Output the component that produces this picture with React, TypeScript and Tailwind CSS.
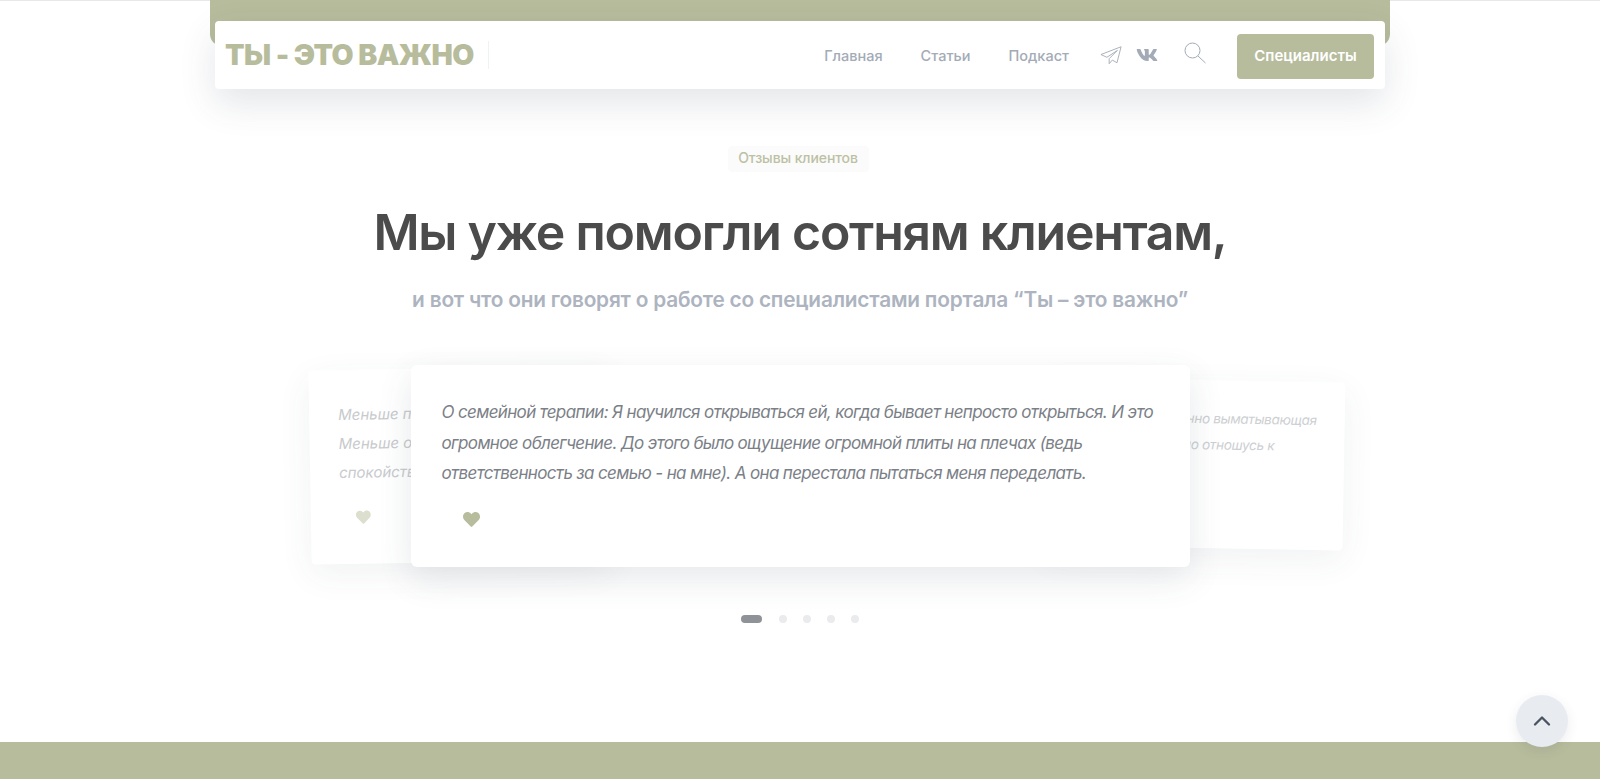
import type { ReactNode } from "react";
import { ChevronUp } from "lucide-react";
import { FaHeart, FaVk } from "react-icons/fa";

const font = "font-['Inter','Liberation_Sans',sans-serif]";

const Header = () => {
  return (
    <div className="relative flex w-full flex-col items-center">
      <div className="h-[46px] w-[1180px] rounded-b-xl bg-[#b7bc9c]"></div>
      <header className="z-10 -mt-[25px] flex h-[68px] w-[1170px] items-center rounded bg-white pl-[10px] pr-[11px] shadow-[0_14px_36px_rgba(60,70,90,0.14)]">
        <div className="mt-[1px] text-[28.5px] font-black tracking-[-0.55px] whitespace-nowrap text-[#b7bc9c]">ТЫ - ЭТО ВАЖНО</div>
        <div className="ml-[14px] h-7 w-px bg-[#f0f1f3]"></div>
        <nav className="mt-[2px] ml-auto flex items-center gap-[38px] text-[14.5px] font-medium text-[#a3abb6]">
          <a>Главная</a>
          <a>Статьи</a>
          <a>Подкаст</a>
        </nav>
        <div className="ml-[31px] flex items-center">
          <svg width="22" height="22" viewBox="0 0 24 24" fill="none" stroke="#a3abb6" strokeWidth="1" strokeLinejoin="round">
            <path d="M23 3 1 11.500l6.500 3L19 7l-9 9v5.500l3.500-4 5 3z" />
          </svg>
          <FaVk className="ml-[14px] h-[22px] w-[22px] text-[#a3abb6]" />
          <svg className="ml-[26px] -mt-[5px]" width="22" height="22" viewBox="0 0 22 22" fill="none" stroke="#a3abb6" strokeWidth="1">
            <circle cx="8.500" cy="8.500" r="7.500" />
            <path d="M14 14l7.500 7" />
          </svg>
        </div>
        <button className="mt-[2px] ml-[31px] h-[45px] w-[137px] rounded bg-[#b7bc9c] text-[15px] font-semibold text-white">Специалисты</button>
      </header>
    </div>
  );
};

const SideCard = ({ side, children }: { side: string; children: ReactNode }) => {
  return <div className={side}>{children}</div>;
};

const Reviews = () => {
  return (
    <section className="flex flex-1 flex-col items-center">
      <div className="mt-[57px] -ml-[4px] flex h-[26px] w-[141px] items-center justify-center rounded bg-[#fbfbfb] pb-[4px] text-[14px] font-medium tracking-[-0.1px] text-[#bcc1a4]">Отзывы клиентов</div>
      <h1 className="mt-[29px] text-[50px] leading-[62px] font-semibold tracking-[-1.23px] whitespace-nowrap text-[#4b4b4b]">Мы уже помогли сотням клиентам,</h1>
      <h2 className="mt-[22px] text-[20.8px] leading-[30px] font-semibold tracking-[-0.2px] whitespace-nowrap text-[#adb4bf]">и вот что они говорят о работе со специалистами портала “Ты – это важно”</h2>

      <div className="relative mt-[50px] w-[779px]">
        <SideCard side="absolute top-[3px] -left-[101px] h-[194px] w-[300px] -rotate-1 overflow-hidden rounded bg-white pt-[30px] pl-[29px] text-[15px] leading-[29px] whitespace-nowrap text-[#c8cacd] italic shadow-[0_10px_34px_rgba(60,70,90,0.07)]">
          <p>Меньше пр</p>
          <p>Меньше об</p>
          <p>спокойств</p>
          <FaHeart className="mt-[23px] ml-[16px] h-[15px] w-[15px] text-[#dcdfcd]" />
        </SideCard>
        <SideCard side="absolute top-[15px] -right-[154px] flex h-[168px] w-[300px] rotate-1 flex-col items-end overflow-hidden rounded bg-white pt-[25px] pr-[28px] text-[13.5px] leading-[26px] tracking-[-0.3px] whitespace-nowrap text-[#cdcfd2] italic shadow-[0_10px_34px_rgba(60,70,90,0.07)]">
          <p>янно выматывающая</p>
          <p className="pr-[42px]">но отношусь к</p>
        </SideCard>
        <div className="relative z-10 h-[202px] rounded-md bg-white pt-[32px] pl-[31px] shadow-[0_12px_34px_rgba(60,70,90,0.12)]">
          <p className="text-[17px] leading-[30.5px] tracking-[-0.65px] whitespace-nowrap text-[#7b8087] italic">
            О семейной терапии: Я научился открываться ей, когда бывает непросто открыться. И это
            <br />
            огромное облегчение. До этого было ощущение огромной плиты на плечах (ведь
            <br />
            ответственность за семью - на мне). А она перестала пытаться меня переделать.
          </p>
          <FaHeart className="mt-[22px] ml-[21px] h-[17px] w-[17px] text-[#b7bc9c]" />
        </div>
      </div>

      <div className="mt-[48px] flex items-center">
        <span className="h-[8px] w-[21px] rounded-full bg-[#8f9296]"></span>
        <span className="ml-[17px] h-[8px] w-[8px] rounded-full bg-[#eaebec]"></span>
        <span className="ml-[16px] h-[8px] w-[8px] rounded-full bg-[#eaebec]"></span>
        <span className="ml-[16px] h-[8px] w-[8px] rounded-full bg-[#eaebec]"></span>
        <span className="ml-[16px] h-[8px] w-[8px] rounded-full bg-[#eaebec]"></span>
      </div>
    </section>
  );
};

export default function App() {
  return (
    <main className={`${font} relative flex h-[779px] flex-col overflow-hidden bg-white`}>
      <div className="absolute inset-x-0 top-0 h-px bg-[#e8e8e8]"></div>
      <Header />
      <Reviews />
      <div className="h-[37px] bg-[#b7bc9c]"></div>
      <button className="absolute top-[695px] right-[32px] z-20 flex h-[52px] w-[52px] items-center justify-center rounded-full bg-[#e8ecf1] text-[#4a5360] shadow-[0_4px_12px_rgba(60,70,90,0.1)]">
        <ChevronUp className="h-7 w-7" strokeWidth={2} />
      </button>
    </main>
  );
}
